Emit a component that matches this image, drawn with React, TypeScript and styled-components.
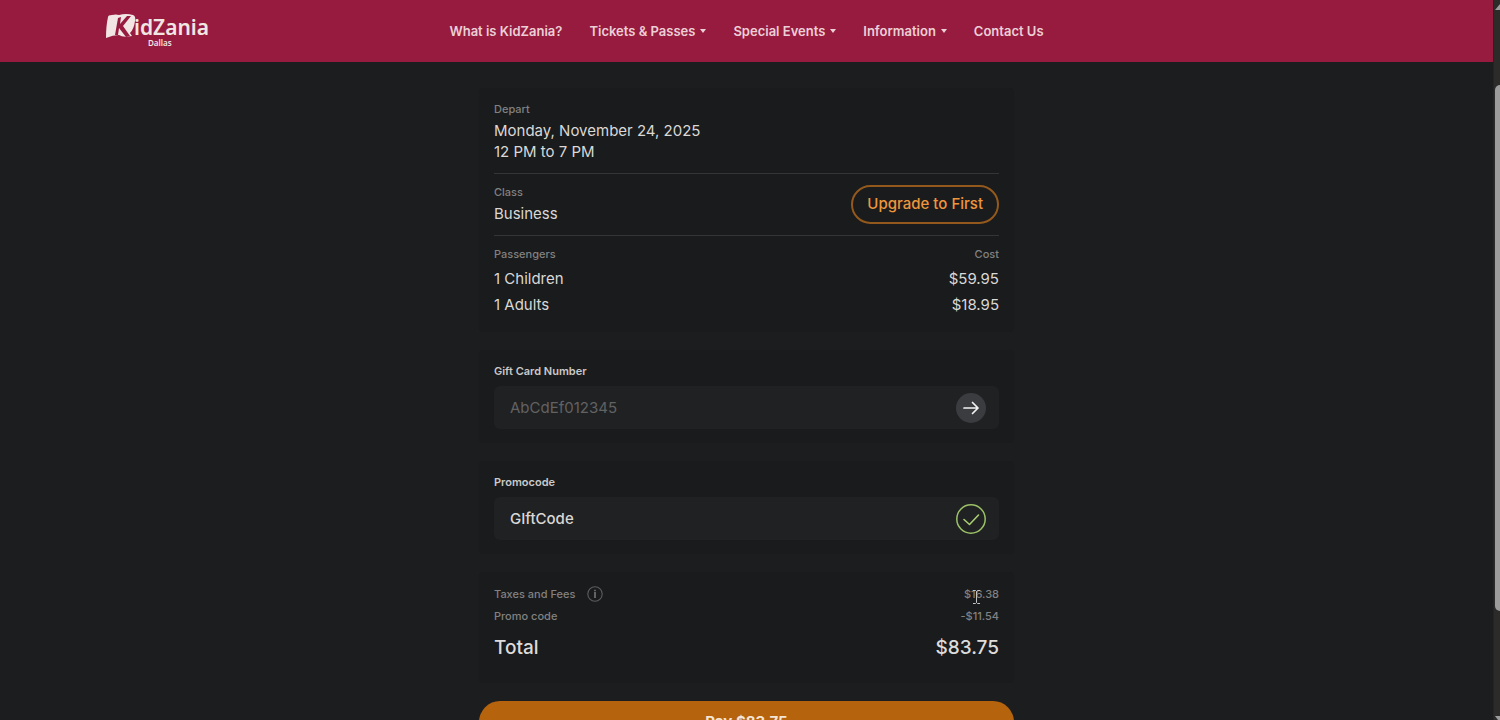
import React from "react";
import styled, { createGlobalStyle } from "styled-components";

const GlobalStyle = createGlobalStyle`
  *, *::before, *::after { box-sizing: border-box; }
  body { margin: 0; background: #1c1d1e; }
  button, input { font: inherit; color: inherit; margin: 0; }
  p, h1, h2, dl, dd, ul { margin: 0; padding: 0; }
`;

const Window = styled.div`
  display: flex;
  height: 100vh;
  overflow: hidden;
  font-family: Inter, "Liberation Sans", sans-serif;
  font-size: 15px;
  line-height: 20px;
  color: #d9d8d6;
`;

const Page = styled.div`
  flex: 1;
  min-width: 0;
  overflow: hidden;
`;

const Header = styled.header`
  display: grid;
  grid-template-columns: 1fr auto 1fr;
  align-items: center;
  height: 62px;
  padding: 0 106px;
  background: #961b3f;
`;

const LogoLink = styled.a`
  display: block;
  width: 106px;
  height: 36px;
`;

const Nav = styled.nav`
  display: flex;
  gap: 27px;
`;

const NavLink = styled.a`
  display: flex;
  align-items: center;
  gap: 5px;
  font-size: 13px;
  font-weight: 600;
  color: #eccfd6;
  text-decoration: none;
  white-space: nowrap;
`;

const Column = styled.main`
  display: flex;
  flex-direction: column;
  gap: 18px;
  max-width: 535px;
  margin: 0 auto;
  padding-top: 26px;
`;

const Card = styled.section`
  padding: 11px 15px 14px;
  border-radius: 4px;
  background: #1a1b1c;
`;

const Block = styled.div`
  display: flex;
  justify-content: space-between;
  align-items: center;
  padding-bottom: 11px;
  margin-bottom: 8px;
  border-bottom: 1px solid #333536;
`;

const Caption = styled.p`
  margin-bottom: 1px;
  font-size: 11px;
  font-weight: 500;
  color: #818181;
`;

const Value = styled.p`
  line-height: 21px;
`;

const UpgradeButton = styled.button`
  height: 39px;
  margin-top: 2px;
  padding: 0 14px;
  border: 2px solid #93591c;
  border-radius: 20px;
  background: transparent;
  font-weight: 500;
  color: #ee963c;
`;

const CostTable = styled.table`
  width: 100%;
  border-collapse: collapse;

  th, td { padding: 0; text-align: left; font-weight: 400; }
  th { font-size: 11px; font-weight: 500; color: #818181; height: 22px; vertical-align: top; }
  td { height: 26px; }
  th:last-child, td:last-child { text-align: right; }
`;

const FieldLabel = styled.label`
  display: block;
  margin-bottom: 5px;
  font-size: 11px;
  font-weight: 600;
  color: #c9c9c8;
`;

const Field = styled.div`
  display: flex;
  align-items: center;
  height: 43px;
  padding: 0 13px 0 16px;
  border-radius: 6px;
  background: #202122;
`;

const FieldInput = styled.input<{ $filled?: boolean }>`
  flex: 1;
  min-width: 0;
  padding: 0;
  border: 0;
  outline: 0;
  background: transparent;
  font-weight: ${(p) => (p.$filled ? 500 : 400)};

  &::placeholder { color: #626262; opacity: 1; }
`;

const RoundButton = styled.button`
  display: grid;
  place-items: center;
  width: 30px;
  height: 30px;
  padding: 0;
  border: 0;
  border-radius: 50%;
  background: transparent;
`;

const TotalRow = styled.div<{ $grand?: boolean }>`
  display: flex;
  justify-content: space-between;
  align-items: center;
  height: ${(p) => (p.$grand ? "42px" : "22px")};
  font-size: ${(p) => (p.$grand ? "19px" : "11px")};
  font-weight: 500;
  color: ${(p) => (p.$grand ? "#dddcda" : "#818181")};

  dt { display: flex; align-items: center; gap: 12px; }
`;

const InfoButton = styled.button`
  display: grid;
  padding: 0;
  border: 0;
  background: transparent;
`;

const Amount = styled.dd`
  position: relative;
`;

const Pointer = styled.svg`
  position: absolute;
  right: 18px;
  top: 5px;
`;

const PayButton = styled.button`
  height: 42px;
  border: 0;
  border-radius: 21px;
  background: #b6630e;
  font-weight: 700;
  color: #f3e4d3;
`;

const ScrollTrack = styled.div`
  display: flex;
  flex-direction: column;
  justify-content: space-between;
  align-items: flex-end;
  width: 7px;
  border-left: 1px solid #262324;
  background: #2c2b2a;
`;

const ScrollThumb = styled.div`
  flex: 0 0 73%;
  width: 5px;
  margin-bottom: 30px;
  border-radius: 5px 0 0 5px;
  background: #9c9c9c;
`;

const Logo = () => (
  <svg width="106" height="36" viewBox="0 0 106 36" role="img" aria-label="KidZania Dallas">
    <path
      d="M2 4 Q2 2 6 2 Q10 1 13 2 Q20 0 27 2 Q30 3 29 8 Q28 16 24 20 L26 23 Q17 25 13 22 Q7 22 0 25 Q0 13 2 4Z"
      fill="#f1e6e3"
    />
    <path
      d="M12 5 L15 4 L14 11 L21 3 L25 3 L17 13 L24 23 L20 24 L13 15 L12 22 L9 22Z"
      fill="#961b3f"
    />
    <text
      x="28"
      y="22"
      fill="#f1e6e3"
      fontFamily="'Noto Sans', sans-serif"
      fontSize="21"
      fontWeight="600"
    >
      idZania
    </text>
    <text
      x="42"
      y="33"
      fill="#f1e6e3"
      fontFamily="'Noto Sans', sans-serif"
      fontSize="8"
      fontWeight="600"
    >
      Dallas
    </text>
  </svg>
);

const Caret = () => (
  <svg width="6" height="4" viewBox="0 0 6 4" aria-hidden="true">
    <path d="M0 0H6L3 4Z" fill="currentColor" />
  </svg>
);

const ArrowIcon = () => (
  <svg width="30" height="30" viewBox="0 0 30 30" fill="none" aria-hidden="true">
    <circle cx="15" cy="15" r="15" fill="#3a3c40" />
    <path
      d="M8 15H22M16.5 9.5L22 15L16.5 20.5"
      stroke="#f2f2f2"
      strokeWidth="1.7"
      strokeLinecap="round"
      strokeLinejoin="round"
    />
  </svg>
);

const CheckIcon = () => (
  <svg width="30" height="30" viewBox="0 0 30 30" fill="none" aria-hidden="true">
    <circle cx="15" cy="15" r="14.2" stroke="#9cc267" strokeWidth="1.5" />
    <path
      d="M8 15.5L13.5 20.5L22.5 11"
      stroke="#a9cd72"
      strokeWidth="1.6"
      strokeLinecap="round"
      strokeLinejoin="round"
    />
  </svg>
);

const InfoIcon = () => (
  <svg width="16" height="16" viewBox="0 0 16 16" fill="none" aria-hidden="true">
    <circle cx="8" cy="8" r="7.2" stroke="#5c5d5d" strokeWidth="1.1" />
    <path d="M8 6V12" stroke="#8b8b8b" strokeWidth="1.3" />
    <path d="M8 3.8V5.2" stroke="#8b8b8b" strokeWidth="1.3" />
  </svg>
);

const links = [
  { text: "What is KidZania?", menu: false },
  { text: "Tickets & Passes", menu: true },
  { text: "Special Events", menu: true },
  { text: "Information", menu: true },
  { text: "Contact Us", menu: false },
];

const tickets = [
  { name: "1 Children", cost: "$59.95" },
  { name: "1 Adults", cost: "$18.95" },
];

export default function App() {
  return (
    <>
      <GlobalStyle />
      <Window>
        <Page>
          <Header>
            <LogoLink href="#">
              <Logo />
            </LogoLink>
            <Nav>
              {links.map((link) => (
                <NavLink href="#" key={link.text}>
                  {link.text}
                  {link.menu && <Caret />}
                </NavLink>
              ))}
            </Nav>
          </Header>
          <Column>
            <Card>
              <Block>
                <div>
                  <Caption>Depart</Caption>
                  <Value>Monday, November 24, 2025</Value>
                  <Value>12 PM to 7 PM</Value>
                </div>
              </Block>
              <Block>
                <div>
                  <Caption>Class</Caption>
                  <Value>Business</Value>
                </div>
                <UpgradeButton type="button">Upgrade to First</UpgradeButton>
              </Block>
              <CostTable>
                <thead>
                  <tr>
                    <th scope="col">Passengers</th>
                    <th scope="col">Cost</th>
                  </tr>
                </thead>
                <tbody>
                  {tickets.map((ticket) => (
                    <tr key={ticket.name}>
                      <td>{ticket.name}</td>
                      <td>{ticket.cost}</td>
                    </tr>
                  ))}
                </tbody>
              </CostTable>
            </Card>
            <Card>
              <FieldLabel htmlFor="gift-card">Gift Card Number</FieldLabel>
              <Field>
                <FieldInput id="gift-card" type="text" placeholder="AbCdEf012345" />
                <RoundButton type="button" aria-label="Apply gift card">
                  <ArrowIcon />
                </RoundButton>
              </Field>
            </Card>
            <Card>
              <FieldLabel htmlFor="promo">Promocode</FieldLabel>
              <Field>
                <FieldInput id="promo" type="text" defaultValue="GIftCode" $filled />
                <RoundButton type="button" aria-label="Promocode applied">
                  <CheckIcon />
                </RoundButton>
              </Field>
            </Card>
            <Card>
              <dl>
                <TotalRow>
                  <dt>
                    Taxes and Fees
                    <InfoButton type="button" aria-label="About taxes and fees">
                      <InfoIcon />
                    </InfoButton>
                  </dt>
                  <Amount>
                    $16.38
                    <Pointer width="9" height="16" viewBox="0 0 9 16" fill="none" aria-hidden="true">
                      <path d="M1 1.5H3.5L4.5 2.5L5.5 1.5H8M4.5 2.5V13.5M1 14.5H3.5L4.5 13.5L5.5 14.5H8" stroke="#c4c4c4" />
                    </Pointer>
                  </Amount>
                </TotalRow>
                <TotalRow>
                  <dt>Promo code</dt>
                  <Amount>-$11.54</Amount>
                </TotalRow>
                <TotalRow $grand>
                  <dt>Total</dt>
                  <Amount>$83.75</Amount>
                </TotalRow>
              </dl>
            </Card>
            <PayButton type="button">Pay $83.75</PayButton>
          </Column>
        </Page>
        <ScrollTrack aria-hidden="true">
          <svg width="5" height="10" viewBox="0 0 5 10">
            <path d="M0 10L5 4V10Z" fill="#9c9c9c" />
          </svg>
          <ScrollThumb />
          <svg width="5" height="4" viewBox="0 0 5 4">
            <path d="M0 0H5V4H3Z" fill="#9c9c9c" />
          </svg>
        </ScrollTrack>
      </Window>
    </>
  );
}
